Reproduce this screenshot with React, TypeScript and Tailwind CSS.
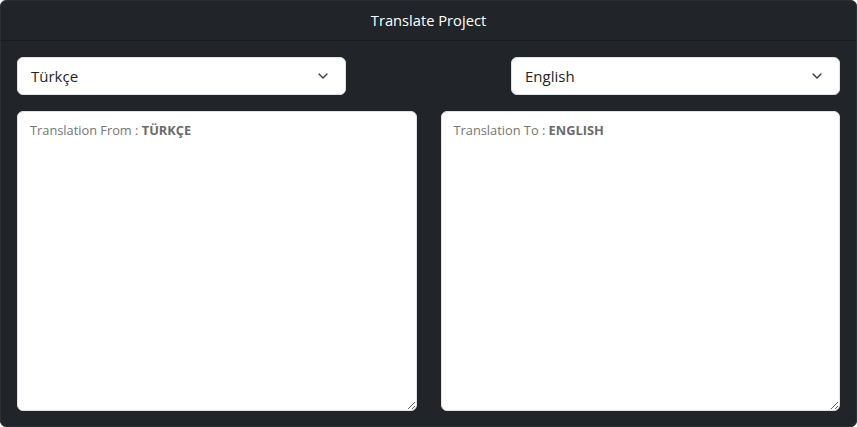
import { ChevronDown } from "lucide-react";

const font = { fontFamily: '"Segoe UI", "Open Sans", "Noto Sans", sans-serif' };

function LangSelect({ value }: { value: string }) {
  return (
    <div className="flex h-[38px] w-[329px] items-center justify-between rounded-md border border-[#dee2e6] bg-white pl-[13px] pr-[14px] text-[15px] text-[#212529]">
      <span>{value}</span>
      <ChevronDown className="h-4 w-4 text-[#343a40]" strokeWidth={2} />
    </div>
  );
}

function TranslationBox({ label, lang }: { label: string; lang: string }) {
  return (
    <div className="relative flex-1">
      <textarea
        className="block h-[300px] w-full resize-y rounded-md border border-[#dee2e6] bg-white px-3 py-2 text-[14px] outline-none"
        defaultValue=""
      />
      <div className="pointer-events-none absolute left-[13px] top-[10px] text-[12.8px] text-[#757575]">
        {label} : <span className="font-bold text-[#6b6b6b]">{lang}</span>
      </div>
    </div>
  );
}

export default function App() {
  return (
    <div className="h-[427px] w-[857px] bg-white" style={font}>
      <div className="flex h-full flex-col overflow-hidden rounded-md border border-[#2b3035] bg-[#212529]">
        <div className="flex h-[40px] items-center justify-center border-b border-[#1a1d20] text-[14.7px] text-white">
          Translate Project
        </div>
        <div className="flex flex-col gap-4 px-4 pt-4">
          <div className="flex justify-between">
            <LangSelect value="Türkçe" />
            <LangSelect value="English" />
          </div>
          <div className="flex gap-6">
            <TranslationBox label="Translation From" lang="TÜRKÇE" />
            <TranslationBox label="Translation To" lang="ENGLISH" />
          </div>
        </div>
      </div>
    </div>
  );
}
